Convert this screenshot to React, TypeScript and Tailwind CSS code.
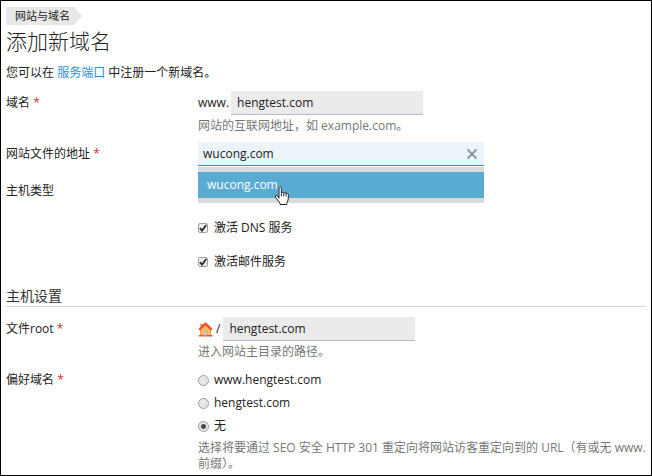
import { useState } from "react";

const fieldClass =
  "h-6 w-48 border-b border-[#b3bcc4] bg-[#ebebeb] px-1.5 text-[#222] outline-none";

const radioClass =
  "h-[11px] w-[11px] shrink-0 appearance-none rounded-full border border-[#a0a0a0] bg-[#e6e6e6] checked:bg-[radial-gradient(circle,#4a4a4a_2px,#e6e6e6_3px)]";

const Required = () => <span className="text-[#d02f2f]">*</span>;

// Tick box with its label
const CheckOption = ({ id, label }: { id: string; label: string }) => {
  const [checked, setChecked] = useState(true);

  return (
    <div className="flex h-4 items-center gap-1.5">
      <span className="relative flex">
        <input
          id={id}
          type="checkbox"
          checked={checked}
          onChange={() => setChecked(!checked)}
          className="h-2.5 w-2.5 appearance-none rounded-xs border border-[#a0a0a0] bg-[#eeeeee]"
        />
        {checked && (
          <svg viewBox="0 0 10 10" className="pointer-events-none absolute inset-0 h-2.5 w-2.5">
            <path d="M2 5.2l2 2.4L8.2 2" fill="none" stroke="#333" strokeWidth="1.9" />
          </svg>
        )}
      </span>
      <label htmlFor={id}>{label}</label>
    </div>
  );
};

const HomeIcon = () => (
  <svg viewBox="0 0 15 15" className="h-[15px] w-[15px] shrink-0" aria-hidden="true">
    <path d="M2.5 8L7.5 3l5 5v5.500h-10z" fill="#ffc063" stroke="#f7954a" strokeWidth="1" />
    <path d="M.5 13.800h14" stroke="#c2551c" strokeWidth="1.300" />
    <path d="M2.500 2h2v3.500h-2z" fill="#f4683a" />
    <path d="M1.200 7.800L7.500 1.700l6.300 6.100" fill="none" stroke="#f9552b" strokeWidth="2.400" strokeLinejoin="round" />
    <path d="M6 8.800h3v4.500H6z" fill="#b9d3e6" stroke="#e58a55" strokeWidth=".6" />
  </svg>
);

// Hand pointer that hovers over the suggestion
const HandPointer = () => (
  <svg viewBox="0 0 16 20" className="absolute top-3.5 left-[76px] h-5 w-4" aria-hidden="true">
    <path
      d="M5 12.2V2.4C5 .6 7.4.6 7.4 2.4V7c0-1 2.4-1 2.4.4 0-1.1 2.3-1 2.3.5 0-1 2.2-.8 2.2.7v4.1c0 2-1.5 3-1.5 4.6v1.2H6v-1.2C5.4 15.8 2.9 13.5 1.5 11c-.7-1.5.8-2.1 1.8-1.1z"
      fill="#fff"
      stroke="#222"
      strokeWidth="1"
      strokeLinejoin="round"
    />
    <path d="M7.4 7v3.5M9.8 7.5v3M12.1 8v2.5" stroke="#222" strokeWidth=".9" />
  </svg>
);

const App = () => {
  const [domain, setDomain] = useState("hengtest.com");
  const [location, setLocation] = useState("wucong.com");
  const [root, setRoot] = useState("hengtest.com");
  const [preferred, setPreferred] = useState("none");

  return (
    <div className="min-h-screen border border-black bg-white px-[5px] pt-1.5 font-['Open_Sans','Noto_Sans_CJK_SC',sans-serif] text-xs leading-4 text-[#222]">
      {/* Breadcrumb */}
      <nav className="flex">
        <a href="#domains" className="flex h-[18px] items-center bg-[#e8e8e8] pr-3 pl-[9px] text-[11px] [clip-path:polygon(0_0,calc(100%-8px)_0,100%_50%,calc(100%-8px)_100%,0_100%)]">
          网站与域名
        </a>
      </nav>
      <h1 className="mt-0.5 text-[21px] leading-7 font-light text-[#222]">添加新域名</h1>
      <p className="mt-2.5">
        您可以在 <a href="#port" className="text-[#2a8fdb]">服务端口</a> 中注册一个新域名。
      </p>

      <form onSubmit={(e) => e.preventDefault()}>
        <div className="mt-2.5 flex">
          <label htmlFor="domain" className="w-48 shrink-0 pt-1">域名 <Required /></label>
          <div>
            <div className="flex items-center gap-0.5">
              <span>www.</span>
              <input id="domain" type="text" value={domain} onChange={(e) => setDomain(e.target.value)} className={fieldClass} />
            </div>
            <p className="mt-[3px] text-[#777]">网站的互联网地址，如 example.com。</p>
          </div>
        </div>

        <div className="mt-2 flex">
          <label htmlFor="location" className="w-48 shrink-0 pt-1">网站文件的地址 <Required /></label>
          <div className="relative w-[286px]">
            <div className="flex h-6 items-center border-b border-[#2c9bc4] bg-[#eaf4f9] pr-1.5">
              <input id="location" type="text" value={location} onChange={(e) => setLocation(e.target.value)} className="h-full min-w-0 flex-1 px-[5px] outline-none" />
              <button type="button" aria-label="清除" onClick={() => setLocation("")}>
                <svg viewBox="0 0 12 12" className="h-3 w-3">
                  <path d="M1.5 1.5l9 9M10.5 1.5l-9 9" stroke="#8a989f" strokeWidth="1.8" />
                </svg>
              </button>
            </div>
            {/* Suggestions */}
            <div className="absolute inset-x-0 top-full mt-px border-y-5 border-[#dadada]">
              <button type="button" className="block h-[26px] w-full bg-[#5aabd2] px-[9px] text-left text-white">wucong.com</button>
              <HandPointer />
            </div>
          </div>
        </div>

        <div className="mt-[13px] flex">
          <span className="w-48 shrink-0 pt-1">主机类型</span>
          <div className="flex flex-col gap-[18px] pt-[41px]">
            <CheckOption id="dns" label="激活 DNS 服务" />
            <CheckOption id="mail" label="激活邮件服务" />
          </div>
        </div>

        {/* Hosting settings */}
        <h2 className="mt-4 border-b border-[#d8d8d8] text-sm leading-5 text-[#333]">主机设置</h2>

        <div className="mt-2.5 flex">
          <label htmlFor="root" className="w-48 shrink-0 pt-1">文件root <Required /></label>
          <div>
            <div className="flex items-center">
              <HomeIcon />
              <span className="mx-[3px]">/</span>
              <input id="root" type="text" value={root} onChange={(e) => setRoot(e.target.value)} className={fieldClass} />
            </div>
            <p className="mt-[3px] text-[#777]">进入网站主目录的路径。</p>
          </div>
        </div>

        <div className="mt-3 flex" role="radiogroup" aria-labelledby="preferred">
          <span id="preferred" className="w-48 shrink-0">偏好域名 <Required /></span>
          <div className="flex flex-col gap-[7px]">
            <label className="flex items-center gap-[5px]">
              <input type="radio" name="preferred" checked={preferred === "www"} onChange={() => setPreferred("www")} className={radioClass} />
              www.hengtest.com
            </label>
            <label className="flex items-center gap-[5px]">
              <input type="radio" name="preferred" checked={preferred === "bare"} onChange={() => setPreferred("bare")} className={radioClass} />
              hengtest.com
            </label>
            <div>
              <label className="flex items-center gap-[5px]">
                <input type="radio" name="preferred" checked={preferred === "none"} onChange={() => setPreferred("none")} className={radioClass} />
                无
              </label>
              <p className="mt-1.5 text-[#777]">
                选择将要通过 SEO 安全 HTTP 301 重定向将网站访客重定向到的 URL（有或无 www.
                <br />
                前缀）。
              </p>
            </div>
          </div>
        </div>
      </form>
    </div>
  );
};

export default App;
